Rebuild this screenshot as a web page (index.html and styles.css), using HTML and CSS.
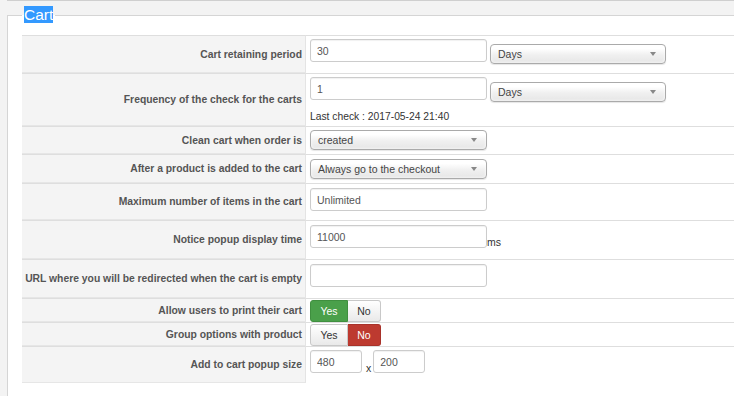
FILE: index.html
```html
<!DOCTYPE html>
<html lang="en">
  <head>
    <meta charset="UTF-8" />
    <meta name="viewport" content="width=device-width, initial-scale=1.0" />
    <title>Cart configuration</title>
    <link rel="stylesheet" href="styles.css">
  </head>
  <body>
    <div class="prev-panel"></div>
    <fieldset class="panel">
      <legend><span class="selected">Cart</span></legend>
      <table class="config">
        <tbody>
          <tr class="h38">
            <td class="key">Cart retaining period</td>
            <td class="value">
              <div class="field">
                <input type="text" class="text" value="30" />
                <span class="select wide low">Days</span>
              </div>
            </td>
          </tr>
          <tr class="h53">
            <td class="key">Frequency of the check for the carts</td>
            <td class="value">
              <div class="field">
                <input type="text" class="text" value="1" />
                <span class="select wide low">Days</span>
              </div>
              <div class="note">Last check : 2017-05-24 21:40</div>
            </td>
          </tr>
          <tr class="h28">
            <td class="key">Clean cart when order is</td>
            <td class="value">
              <span class="select">created</span>
            </td>
          </tr>
          <tr class="h29">
            <td class="key">After a product is added to the cart</td>
            <td class="value down">
              <span class="select">Always go to the checkout</span>
            </td>
          </tr>
          <tr class="h37">
            <td class="key">Maximum number of items in the cart</td>
            <td class="value down">
              <input type="text" class="text" value="Unlimited" />
            </td>
          </tr>
          <tr class="h39">
            <td class="key">Notice popup display time</td>
            <td class="value down">
              <div class="field">
                <input type="text" class="text" value="11000" />
                <span class="unit">ms</span>
              </div>
            </td>
          </tr>
          <tr class="h39">
            <td class="key">URL where you will be redirected when the cart is empty</td>
            <td class="value down">
              <input type="text" class="text" value="" />
            </td>
          </tr>
          <tr class="h23">
            <td class="key">Allow users to print their cart</td>
            <td class="value tight">
              <div class="toggle">
                <span class="btn yes active-yes">Yes</span>
                <span class="btn no">No</span>
              </div>
            </td>
          </tr>
          <tr class="h24">
            <td class="key">Group options with product</td>
            <td class="value tight">
              <div class="toggle">
                <span class="btn yes">Yes</span>
                <span class="btn no active-no">No</span>
              </div>
            </td>
          </tr>
          <tr class="h37">
            <td class="key">Add to cart popup size</td>
            <td class="value">
              <div class="field">
                <input type="text" class="text small" value="480" />
                <span class="unit times">x</span>
                <input type="text" class="text small" value="200" />
              </div>
            </td>
          </tr>
        </tbody>
      </table>
    </fieldset>
  </body>
</html>
```

FILE: styles.css
```css
* {
  box-sizing: border-box;
}

html,
body {
  overflow: hidden;
}

body {
  margin: 0;
  background: #f3f3f3;
  font-family: "Liberation Sans", Arial, sans-serif;
  color: #333;
}

.prev-panel {
  margin-left: 7px;
  border-top: 1px solid #cfcfcf;
}

/* the panel runs on past the right edge, so no right border */
.panel {
  margin: 5px 0 0 7px;
  padding: 0 0 20px 14px;
  border: 1px solid #d5d5d5;
  border-right: none;
  background: #fff;
  min-height: 400px;
}

.panel legend {
  padding: 0 2px;
  font-size: 15.5px;
  line-height: 18px;
  color: #fff;
}

.selected {
  background: #3399ff;
}

.config {
  width: 100%;
  margin-top: 11px;
  border-collapse: separate;
  border-spacing: 0;
}

.config td {
  border-top: 1px solid #dedede;
}

.config .key {
  width: 284px;
  padding: 0 3px 0 2px;
  background: #f4f4f4;
  border-right: 1px solid #e4e4e4;
  border-bottom: 1px solid #e6e6e6;
  text-align: right;
  vertical-align: middle;
  font-size: 10.35px;
  font-weight: bold;
  color: #555;
}

.config .value {
  padding: 3px 4px 0 4px;
  vertical-align: top;
  font-size: 10.5px;
}

.config .value.down {
  padding-top: 4px;
}

.config .value.tight {
  padding-top: 0;
}

.h23 { height: 23px; }
.h24 { height: 24px; }
.h28 { height: 28px; }
.h29 { height: 29px; }
.h37 { height: 37px; }
.h38 { height: 38px; }
.h39 { height: 39px; }
.h53 { height: 53px; }

.field {
  display: flex;
  align-items: flex-start;
}

.text {
  display: block;
  width: 177px;
  height: 23px;
  padding: 0 6px;
  border: 1px solid #cccccc;
  border-radius: 3px;
  box-shadow: inset 0 1px 1px rgba(0, 0, 0, 0.06);
  font-family: "Liberation Sans", Arial, sans-serif;
  font-size: 10.5px;
  color: #555;
  outline: none;
}

.text.small {
  width: 52px;
}

.select {
  position: relative;
  display: block;
  width: 177px;
  height: 20px;
  padding: 0 20px 0 7px;
  border: 1px solid #aaaaaa;
  border-radius: 4px;
  background: linear-gradient(#ffffff 20%, #f0f0f0 55%, #e6e6e6);
  box-shadow: 0 0 3px #fff inset, 0 1px 1px rgba(0, 0, 0, 0.1);
  line-height: 18px;
  font-size: 10.5px;
  color: #444;
}

.select::after {
  content: "";
  position: absolute;
  right: 9px;
  top: 7px;
  border-left: 3px solid transparent;
  border-right: 3px solid transparent;
  border-top: 4px solid #888;
}

.select.wide {
  width: 176px;
  margin-left: 3px;
}

.select.low {
  margin-top: 5px;
}

.note {
  margin-top: 9px;
  font-size: 10.3px;
  color: #333;
}

.unit {
  align-self: flex-end;
  line-height: 12px;
  font-size: 10.5px;
  color: #333;
}

.unit.times {
  margin: 0 2px 0 4px;
  line-height: 10px;
}

.toggle {
  display: flex;
  margin-top: 1px;
}

.btn {
  display: block;
  height: 22px;
  line-height: 20px;
  border: 1px solid #c8c8c8;
  background: linear-gradient(#ffffff, #e9e9e9);
  text-align: center;
  font-size: 10.5px;
  color: #333;
}

.btn.yes {
  width: 38px;
  border-radius: 3px 0 0 3px;
}

.btn.no {
  width: 33px;
  border-left: none;
  border-radius: 0 3px 3px 0;
}

.btn.active-yes {
  background: #4aa04a;
  border-color: #3f8f3f;
  color: #fff;
}

.btn.active-no {
  background: #bd3a30;
  border-color: #a8322a;
  color: #fff;
}
```
